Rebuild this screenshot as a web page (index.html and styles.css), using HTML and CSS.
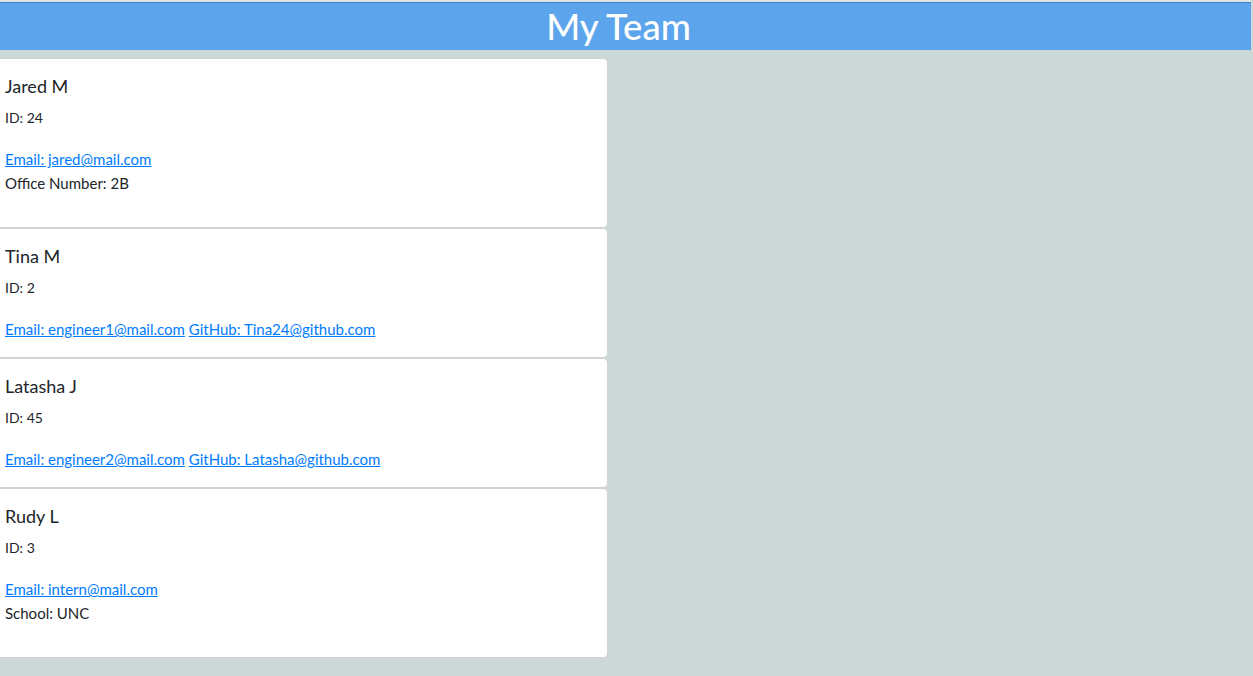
FILE: index.html
```html
<!DOCTYPE html>
<html>
<head>
<meta charset="utf-8">
<title>My Team</title>
<link rel="stylesheet" href="styles.css">
</head>
<body>
<div class="topstrip"></div>
<header class="banner"><h1>My Team</h1></header>
<main class="team">
  <div class="card card-tall">
    <h5 class="name">Jared M</h5>
    <p class="id">ID: 24</p>
    <div class="links"><a href="#">Email: jared@mail.com</a></div>
    <p class="extra">Office Number: 2B</p>
  </div>
  <div class="card">
    <h5 class="name">Tina M</h5>
    <p class="id">ID: 2</p>
    <div class="links"><a href="#">Email: engineer1@mail.com</a> <a href="#">GitHub: Tina24@github.com</a></div>
  </div>
  <div class="card">
    <h5 class="name">Latasha J</h5>
    <p class="id">ID: 45</p>
    <div class="links"><a href="#">Email: engineer2@mail.com</a> <a href="#">GitHub: Latasha@github.com</a></div>
  </div>
  <div class="card card-tall">
    <h5 class="name">Rudy L</h5>
    <p class="id">ID: 3</p>
    <div class="links"><a href="#">Email: intern@mail.com</a></div>
    <p class="extra">School: UNC</p>
  </div>
</main>
</body>
</html>
```
FILE: styles.css
```css
html, body {
  margin: 0;
  padding: 0;
}
body {
  background: #cdd8d8;
  font-family: "Lato", "Open Sans", sans-serif;
  color: #212529;
  width: 1251px;
  height: 676px;
  overflow: hidden;
}
.topstrip {
  height: 2px;
  background: #e4e4e4;
}
.banner {
  background: #5ca4ec;
  border-top: 1px solid #3d82cf;
  height: 47px;
  display: flex;
  justify-content: center;
  align-items: center;
  padding-right: 14px;
}
.banner h1 {
  margin: 0;
  color: #ffffff;
  font-size: 36.5px;
  font-weight: 500;
  line-height: 47px;
}
.team {
  padding-top: 8px;
  width: 608px;
  display: flex;
  flex-direction: column;
}
.card {
  background: #ffffff;
  border: 1px solid #d3d3d3;
  border-left: none;
  border-radius: 0 5px 5px 0;
  padding: 15px 5px 16px 5px;
}
.name {
  margin: 0 0 8px 0;
  font-size: 18px;
  font-weight: 400;
  line-height: 24px;
}
.id {
  margin: 0 0 17px 0;
  font-size: 14px;
  line-height: 24px;
}
.links {
  font-size: 15px;
  line-height: 24px;
}
.links a {
  color: #007bff;
  text-decoration: underline;
}
.extra {
  margin: 0 0 16px 0;
  font-size: 15px;
  line-height: 24px;
}
```
